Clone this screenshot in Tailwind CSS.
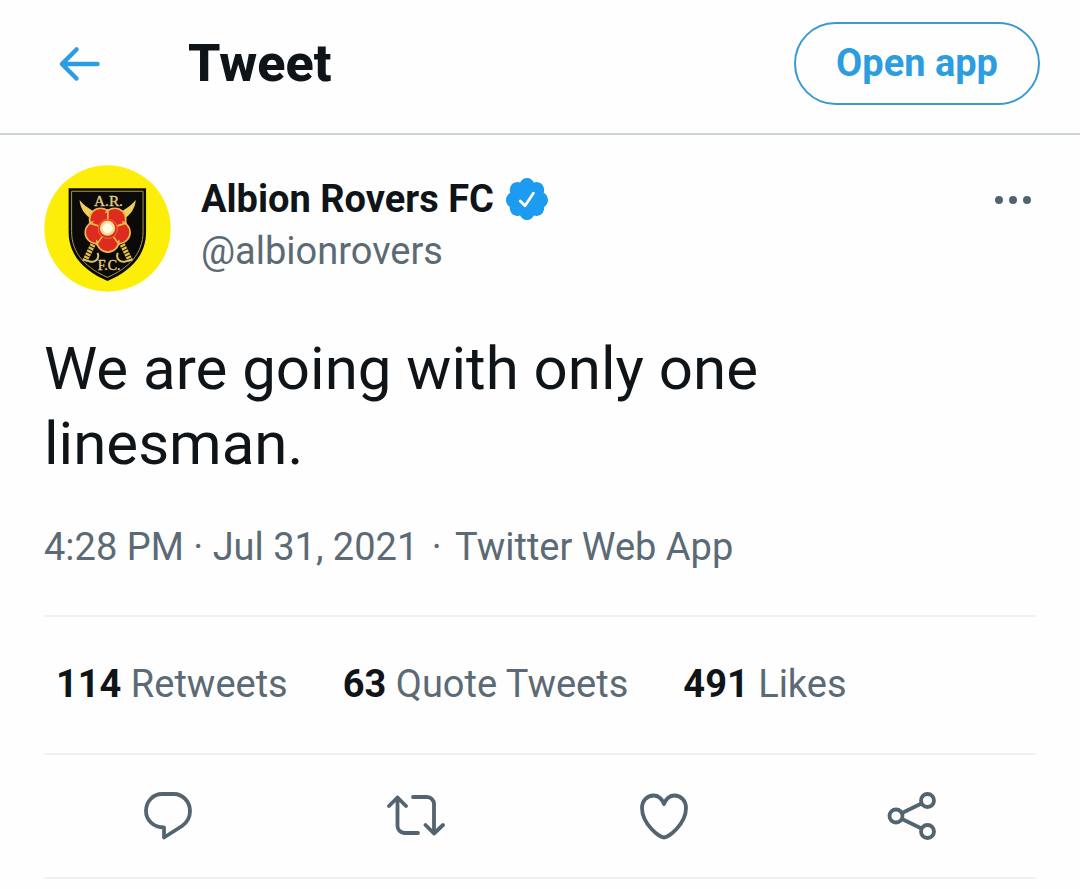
<!DOCTYPE html>
<html lang="en">
<head>
  <meta charset="UTF-8" />
  <meta name="viewport" content="width=device-width, initial-scale=1.0"/>
  <title>Tweet</title>
  <script src="https://cdn.jsdelivr.net/npm/@tailwindcss/browser@4"></script>
</head>
<body class="bg-[#fefefe] text-[#0f1419] font-[Roboto,sans-serif]">
  <!-- Top bar -->
  <header class="flex items-center border-b-2 border-[#cbd5d8] px-10 pt-[22px] pb-7">
    <a href="#" aria-label="Back" class="px-[18px]">
      <svg class="w-[44px] h-[36px]" viewBox="0 0 44 36" fill="none" stroke="#2b9de0" stroke-width="4.5" stroke-linecap="round" stroke-linejoin="round">
        <path d="M18.5 3.5L4 18L18.5 32.5M4 18H39.5"/>
      </svg>
    </a>
    <h1 class="ml-[68px] text-[52px] leading-[64px] font-extrabold">Tweet</h1>
    <button type="button" class="ml-auto h-[83px] rounded-full border-2 border-[#3a9ad0] px-10 text-[38px] font-bold text-[#2b9de0]">Open app</button>
  </header>

  <main class="px-11">
    <article>
      <!-- Author -->
      <div class="flex items-start pt-[30px]">
        <svg class="size-[127px] shrink-0" viewBox="12 14 382 382" role="img" aria-label="Albion Rovers FC crest">
          <circle cx="203" cy="205" r="190" fill="#fcee08"/>
          <path d="M86 84H319V215C319 290 268 335 203 363C138 335 86 290 86 215Z" fill="#0c0a08"/>
          <path d="M95 93H310V214C310 283 264 325 203 352C142 325 95 283 95 214Z" fill="none" stroke="#a39a4c" stroke-width="3"/>
          <!-- Crossed swords -->
          <g id="sword">
            <path d="M119 119C121 145 135 165 158 178L172 158C151 148 135 138 119 119Z" fill="#f0cf56"/>
            <path d="M243 244L272 302" stroke="#e3c04e" stroke-width="16" stroke-dasharray="7 3"/>
            <path d="M234 278C226 298 244 310 260 303L278 298" fill="none" stroke="#dcc36a" stroke-width="6"/>
          </g>
          <use href="#sword" transform="matrix(-1 0 0 1 407 0)"/>
          <!-- Rose -->
          <g fill="#dd2b20" stroke="#e9b94c" stroke-width="5">
            <circle cx="182" cy="177" r="33"/>
            <circle cx="225" cy="177" r="33"/>
            <circle cx="169" cy="217" r="33"/>
            <circle cx="238" cy="217" r="33"/>
            <circle cx="204" cy="243" r="33"/>
          </g>
          <circle cx="204" cy="206" r="48" fill="#dd2b20"/>
          <path d="M204 206V146M204 206L261 188M204 206L239 255M204 206L169 255M204 206L147 188" stroke="#e9b94c" stroke-width="5"/>
          <circle cx="204" cy="206" r="29" fill="#dd2b20" stroke="#ef6a45" stroke-width="3"/>
          <circle cx="203" cy="204" r="23" fill="#fbdc8c"/>
          <circle cx="203" cy="204" r="15" fill="#fffbe6"/>
          <g fill="#e2d184" stroke="#e2d184" font-family="Liberation Serif, serif" text-anchor="middle">
            <text x="206" y="136" font-size="46">A.R.</text>
            <text x="208" y="331" font-size="42">F.C.</text>
          </g>
        </svg>
        <div class="ml-[30px] pt-2 text-[38px] leading-[52px]">
          <div class="flex items-center gap-[11px]">
            <span class="font-bold">Albion Rovers FC</span>
            <svg class="size-[44px]" viewBox="1 1 22 22" fill="#1d9bf0" role="img" aria-label="Verified account">
              <circle cx="12" cy="12" r="8"/>
              <path d="M22.5 12.5c0-1.58-.875-2.95-2.148-3.6.154-.435.238-.905.238-1.4 0-2.21-1.71-3.998-3.818-3.998-.47 0-.92.084-1.336.25C14.818 2.415 13.51 1.5 12 1.5s-2.816.917-3.437 2.25c-.415-.165-.866-.25-1.336-.25-2.11 0-3.818 1.79-3.818 4 0 .494.083.964.237 1.4-1.272.65-2.147 2.018-2.147 3.6 0 1.495.782 2.798 1.942 3.486-.02.17-.032.34-.032.514 0 2.21 1.708 4 3.818 4 .47 0 .92-.086 1.335-.25.62 1.334 1.926 2.25 3.437 2.25 1.512 0 2.818-.916 3.437-2.25.415.163.865.248 1.336.248 2.11 0 3.818-1.79 3.818-4 0-.174-.012-.344-.033-.513 1.158-.687 1.943-1.99 1.943-3.484z"/>
              <path d="M8.6 13L11 15.4L15.2 9.1" fill="none" stroke="#fff" stroke-width="1.4" stroke-linecap="round" stroke-linejoin="round"/>
            </svg>
          </div>
          <div class="text-[#5b6a74]">@albionrovers</div>
        </div>
        <button type="button" aria-label="More" class="ml-auto mt-7 mr-1">
          <svg class="w-[38px] h-[14px]" viewBox="0 0 38 14" fill="#536471">
            <circle cx="5" cy="7" r="4"/>
            <circle cx="19" cy="7" r="4"/>
            <circle cx="33" cy="7" r="4"/>
          </svg>
        </button>
      </div>

      <!-- Text -->
      <p class="mt-[39px] max-w-[800px] text-[60px] leading-[75px]">We are going with only one linesman.</p>
      <p class="mt-10 pb-[42px] text-[38px] leading-[52px] text-[#5b6a74]"><a href="#">4:28 PM · Jul 31, 2021</a><span class="mx-1"> · </span><a href="#">Twitter Web App</a></p>

      <!-- Counts -->
      <div class="flex gap-[55px] border-y-2 border-[#eff1f2] px-3 pt-[41px] pb-[43px] text-[38px] leading-[52px] text-[#5b6a74]">
        <a href="#"><span class="font-bold text-[#0f1419]">114</span> Retweets</a>
        <a href="#"><span class="font-bold text-[#0f1419]">63</span> Quote Tweets</a>
        <a href="#"><span class="font-bold text-[#0f1419]">491</span> Likes</a>
      </div>

      <!-- Actions -->
      <div class="grid h-[124px] grid-cols-4 place-items-center border-b-2 border-[#eff1f2] text-[#536471]">
        <button type="button" aria-label="Reply">
          <svg class="size-12" viewBox="0 0 48 48" fill="none" stroke="currentColor" stroke-width="3.8" stroke-linejoin="round">
            <path d="M18 2H30C39 2 46 10 46 19C46 25.5 43 30.5 38 34L20 45.5V35.5C9.5 35.5 2 28 2 19C2 9.5 9 2 18 2Z"/>
          </svg>
        </button>
        <button type="button" aria-label="Retweet">
          <svg class="w-[58px] h-[42px]" viewBox="0 0 58 42" fill="none" stroke="currentColor" stroke-width="3.8" stroke-linecap="round" stroke-linejoin="round">
            <path d="M2 11L10.5 2.5L19 11M10.5 2.5V31A7 7 0 0 0 17.5 38H31M26 2H40A7 7 0 0 1 47 9V38.5M38.5 30L47 38.5L56 30"/>
          </svg>
        </button>
        <button type="button" aria-label="Like">
          <svg class="w-[50px] h-12" viewBox="0 0 50 48" fill="none" stroke="currentColor" stroke-width="3.8" stroke-linejoin="round">
            <path d="M25 45.5C20.5 45.5 3 32 3 16C3 8.5 8.5 3.5 14.5 3.5C19.5 3.5 23 7 25 12C27 7 30.5 3.5 35.5 3.5C41.5 3.5 47 8.5 47 16C47 32 29.5 45.5 25 45.5Z"/>
          </svg>
        </button>
        <button type="button" aria-label="Share">
          <svg class="w-[50px] h-12" viewBox="0 0 50 48" fill="none" stroke="currentColor" stroke-width="3.8">
            <circle cx="9" cy="24" r="6.5"/>
            <circle cx="40.5" cy="8.5" r="6.5"/>
            <circle cx="40.5" cy="39.5" r="6.5"/>
            <path d="M15 21L34.5 11.5M15 27L34.5 36.5"/>
          </svg>
        </button>
      </div>
    </article>
  </main>
</body>
</html>
